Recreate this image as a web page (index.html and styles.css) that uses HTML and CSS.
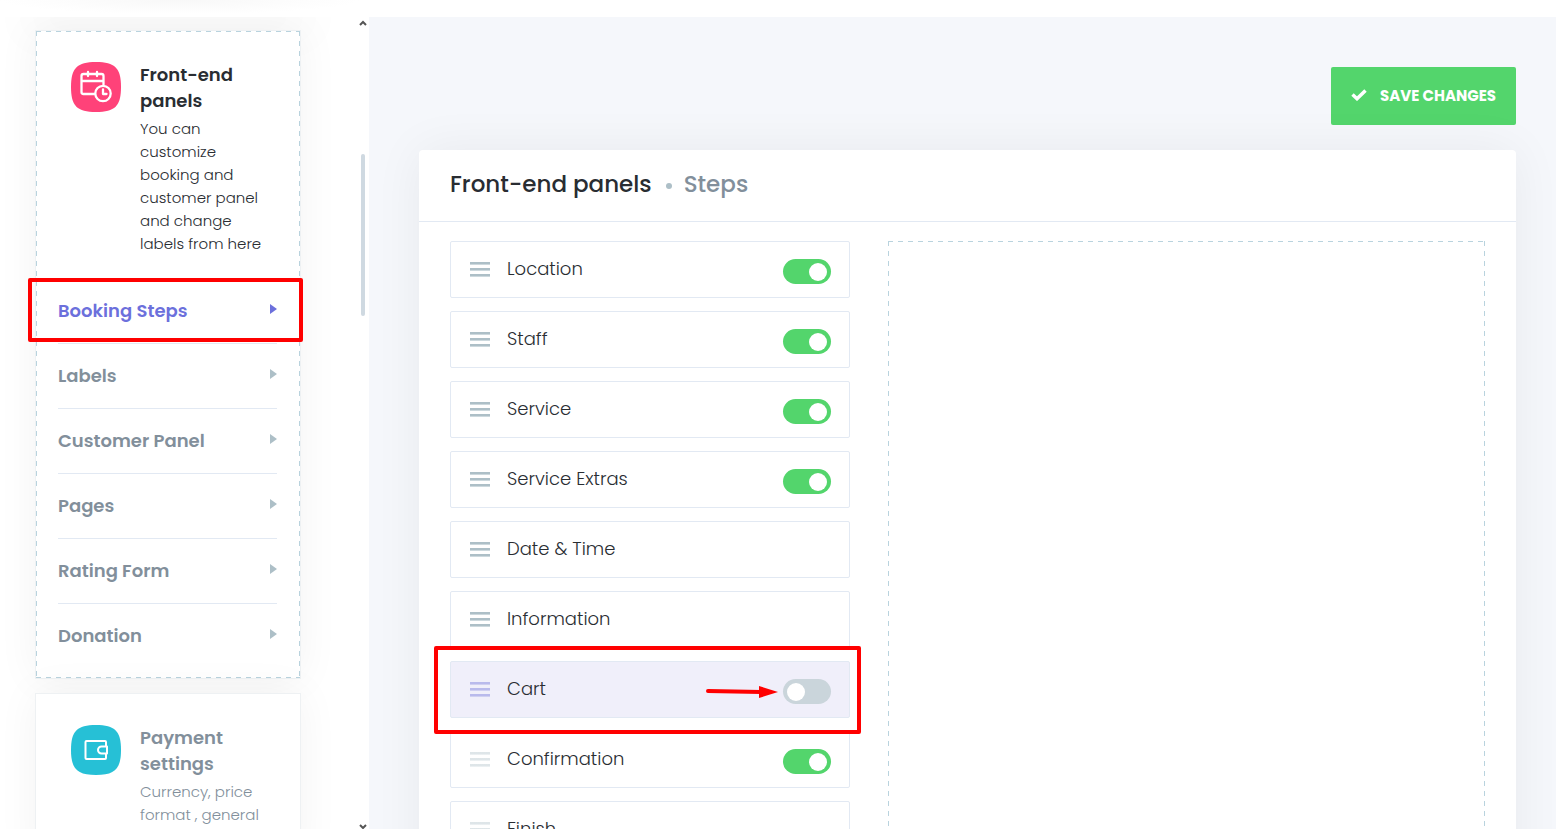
FILE: index.html
```html
<!DOCTYPE html>
<html lang="en">
<head>
<meta charset="utf-8">
<title>Front-end panels - Steps</title>
<link rel="stylesheet" href="styles.css">
</head>
<body>
<header class="topbar"></header>
<div class="layout">
  <aside class="sidebar">
    <div class="settings-list">
      <section class="settings-card settings-card--active">
        <div class="settings-head">
          <svg class="settings-icon" viewBox="0 0 50 50" aria-hidden="true">
            <path fill="#ff4279" d="M25 0C44 0 50 6 50 25S44 50 25 50 0 44 0 25 6 0 25 0z"/>
            <g fill="none" stroke="#fff" stroke-width="2.300" stroke-linecap="round" stroke-linejoin="round">
              <path d="M24 32H12.500Q10.500 32 10.500 30V14Q10.500 12 12.500 12H30.500Q32.500 12 32.500 14V22.500M10.500 19H32.500M17 10v4M26 10v4"/>
              <circle cx="32" cy="31.500" r="7.700"/>
              <path d="M32 27.500V32H35.500"/>
            </g>
          </svg>
          <div class="settings-text">
            <h3 class="settings-title">Front-end<br>panels</h3>
            <p class="settings-desc">You can<br>customize<br>booking and<br>customer panel<br>and change<br>labels from here</p>
          </div>
        </div>
        <nav class="subnav">
          <a class="subnav-link subnav-link--active" href="#steps">Booking Steps<span class="highlight highlight--nav"></span></a>
          <a class="subnav-link" href="#labels">Labels</a>
          <a class="subnav-link" href="#customer">Customer Panel</a>
          <a class="subnav-link" href="#pages">Pages</a>
          <a class="subnav-link" href="#rating">Rating Form</a>
          <a class="subnav-link" href="#donation">Donation</a>
        </nav>
      </section>
      <section class="settings-card">
        <div class="settings-head">
          <svg class="settings-icon" viewBox="0 0 50 50" aria-hidden="true">
            <path fill="#26c0d6" d="M25 0C44 0 50 6 50 25S44 50 25 50 0 44 0 25 6 0 25 0z"/>
            <g fill="none" stroke="#fff" stroke-width="2" stroke-linejoin="round">
              <rect x="14.500" y="16" width="20.500" height="18" rx="1"/>
              <path d="M36 21.500H30.500A3.500 3.500 0 0 0 30.500 28.500H36z" fill="#26c0d6"/>
            </g>
          </svg>
          <div class="settings-text">
            <h3 class="settings-title">Payment<br>settings</h3>
            <p class="settings-desc">Currency, price<br>format , general</p>
          </div>
        </div>
      </section>
    </div>
    <div class="scrollbar" aria-hidden="true">
      <svg class="scroll-arrow" viewBox="0 0 8 6"><path d="M1 5l3-3 3 3"/></svg>
      <div class="scroll-thumb"></div>
      <svg class="scroll-arrow" viewBox="0 0 8 6"><path d="M1 2l3 3 3-3"/></svg>
    </div>
  </aside>
  <main class="content">
    <button class="save" type="button">
      <svg class="save-icon" viewBox="0 0 16 12" aria-hidden="true"><path d="M1.500 5.500L6 9.700 14.500 1.500"/></svg>
      SAVE CHANGES
    </button>
    <section class="panel">
      <header class="panel-head">
        <h1 class="panel-title">Front-end panels</h1>
        <span class="panel-dot"></span>
        <span class="panel-sub">Steps</span>
      </header>
      <div class="panel-body">
        <ul class="steps">
          <li class="step"><span class="handle"></span><label class="step-name" for="s1">Location</label><input class="toggle" id="s1" type="checkbox" checked></li>
          <li class="step"><span class="handle"></span><label class="step-name" for="s2">Staff</label><input class="toggle" id="s2" type="checkbox" checked></li>
          <li class="step"><span class="handle"></span><label class="step-name" for="s3">Service</label><input class="toggle" id="s3" type="checkbox" checked></li>
          <li class="step"><span class="handle"></span><label class="step-name" for="s4">Service Extras</label><input class="toggle" id="s4" type="checkbox" checked></li>
          <li class="step"><span class="handle"></span><span class="step-name">Date &amp; Time</span></li>
          <li class="step"><span class="handle"></span><span class="step-name">Information</span></li>
          <li class="step step--selected"><span class="handle"></span><label class="step-name" for="s7">Cart</label>
            <svg class="pointer" viewBox="0 0 72 12" aria-hidden="true"><path d="M2 5L55 6" stroke="#f00" stroke-width="4" stroke-linecap="round"/><path d="M53 0L72 6 53 12z" fill="#f00"/></svg>
            <input class="toggle" id="s7" type="checkbox"><span class="highlight highlight--step"></span></li>
          <li class="step step--fixed"><span class="handle"></span><label class="step-name" for="s8">Confirmation</label><input class="toggle" id="s8" type="checkbox" checked></li>
          <li class="step step--fixed"><span class="handle"></span><span class="step-name">Finish</span></li>
        </ul>
        <div class="step-options"></div>
      </div>
    </section>
  </main>
</div>
</body>
</html>
```
FILE: styles.css
```css
* { box-sizing: border-box; }

body {
  margin: 0;
  height: 100vh;
  display: flex;
  flex-direction: column;
  overflow: hidden;
  background: #f5f7fb;
  color: #292d32;
  font-family: Poppins, Inter, "Open Sans", sans-serif;
}

h1, h3, p, ul { margin: 0; padding: 0; }

.topbar {
  flex: 0 0 17px;
  background: radial-gradient(180px 14px at 180px 0, #f8f8f8, #fff);
}

.layout {
  flex: 1;
  min-height: 0;
  display: flex;
}

.sidebar {
  flex: 0 0 369px;
  display: flex;
  overflow: hidden;
  background: #fff;
}

.settings-list {
  flex: 1;
  padding: 0 56px 0 35px;
}

.settings-list::before {
  content: "";
  display: block;
  margin-bottom: 13px;
  box-shadow: 0 0 50px 10px rgba(0, 0, 0, .06);
}

.settings-card {
  margin-bottom: 14px;
  padding: 31px 23px 10px 22px;
  border: 1px solid #eef1f3;
  background-color: #fff;
  box-shadow: 0 0 40px rgba(0, 0, 0, .05);
}

.settings-card--active,
.step-options {
  background-image:
    repeating-linear-gradient(90deg, #b9d3de 0 5px, transparent 5px 10px),
    repeating-linear-gradient(90deg, #b9d3de 0 5px, transparent 5px 10px),
    repeating-linear-gradient(#b9d3de 0 5px, transparent 5px 10px),
    repeating-linear-gradient(#b9d3de 0 5px, transparent 5px 10px);
  background-size: 100% 1px, 100% 1px, 1px 100%, 1px 100%;
  background-position: top, bottom, left, right;
  background-repeat: no-repeat;
}

.settings-head {
  display: flex;
  gap: 19px;
  padding-left: 13px;
  margin-bottom: 24px;
}

.settings-icon { flex: 0 0 50px; height: 50px; }

.settings-text { color: #828f9b; white-space: nowrap; }

.settings-card--active .settings-text { color: #292d32; }

.settings-title {
  margin-bottom: 3px;
  font-size: 18px;
  font-weight: 600;
  line-height: 26px;
}

.settings-desc {
  font-size: 15px;
  font-weight: 300;
  line-height: 23px;
}

.subnav-link {
  position: relative;
  display: flex;
  align-items: center;
  justify-content: space-between;
  height: 65px;
  padding-bottom: 2px;
  border-bottom: 1px solid #e2e9f3;
  color: #828f9b;
  font-size: 18px;
  font-weight: 600;
  text-decoration: none;
}

.subnav-link::after {
  content: "";
  margin-bottom: 2px;
  border: 5px solid transparent;
  border-left: 7px solid #adbfc7;
  border-right: 0;
}

.subnav-link:last-child { height: 64px; border-bottom: 0; }
.subnav-link--active { color: #6c70dc; }
.subnav-link--active::after { border-left-color: #6c70dc; }

.highlight {
  position: absolute;
  border: 4px solid #f00;
  border-radius: 2px;
  pointer-events: none;
}

.highlight--nav { inset: -1px -26px 1px -30px; }
.highlight--step { inset: -16px -12px -17px -17px; }

.scrollbar {
  display: flex;
  flex-direction: column;
  align-items: center;
  width: 12px;
  padding-top: 3px;
}

.scroll-arrow {
  width: 8px;
  height: 6px;
  fill: none;
  stroke: #555;
  stroke-width: 2;
}

.scroll-arrow:last-child { margin-top: auto; }

.scroll-thumb {
  width: 4px;
  height: 20%;
  margin-top: 128px;
  border-radius: 2px;
  background: #cfd9e1;
}

.content {
  flex: 1;
  display: flex;
  flex-direction: column;
  min-width: 0;
  padding: 50px 40px 0 50px;
  overflow: hidden;
}

.save {
  flex: none;
  align-self: flex-end;
  display: flex;
  align-items: center;
  gap: 13px;
  height: 58px;
  margin-bottom: 25px;
  padding: 0 20px 2px;
  border: 0;
  border-radius: 2px;
  background: #53d56c;
  color: #fff;
  font: inherit;
  font-size: 15px;
  font-weight: 700;
}

.save-icon {
  width: 16px;
  height: 12px;
  fill: none;
  stroke: #fff;
  stroke-width: 3.500;
}

.panel {
  flex: none;
  border-radius: 4px;
  background: #fff;
  box-shadow: 0 0 50px rgba(0, 0, 0, .06);
}

.panel-head {
  display: flex;
  align-items: center;
  height: 72px;
  padding: 0 31px 4px;
  border-bottom: 1px solid #e2e9f3;
  font-size: 23px;
  font-weight: 500;
}

.panel-title { font-size: 23px; font-weight: 500; }

.panel-dot {
  width: 6px;
  height: 6px;
  margin: 4px 12px 0 14px;
  border-radius: 50%;
  background: #adbfc7;
}

.panel-sub { color: #828f9b; }

.panel-body {
  display: grid;
  grid-template-columns: minmax(0, 400px) 1fr;
  gap: 38px;
  padding: 19px 31px 30px;
}

.steps {
  display: flex;
  flex-direction: column;
  gap: 13px;
  list-style: none;
}

.step {
  position: relative;
  display: flex;
  align-items: center;
  height: 57px;
  padding: 0 18px 0 19px;
  border: 1px solid #e2e9f3;
  border-radius: 2px;
  background: #fff;
}

.step-name {
  flex: 1;
  padding-bottom: 2px;
  font-size: 18px;
  font-weight: 300;
}

.handle {
  width: 20px;
  height: 15px;
  margin-right: 17px;
  background: repeating-linear-gradient(#adbfc7 0 2px, #cdd9de 2px 3px, transparent 3px 6px);
}

.step--fixed .handle { opacity: .4; }
.step--selected { background: #f0effa; z-index: 1; }
.step--selected .handle { background: repeating-linear-gradient(#b9baec 0 2px, #d0d0f1 2px 3px, transparent 3px 6px); }

.pointer {
  width: 72px;
  height: 12px;
  margin: 5px 5px 0 0;
}

.toggle {
  appearance: none;
  display: flex;
  align-items: center;
  width: 48px;
  height: 25px;
  margin: 4px 0 0;
  padding: 0 4px;
  border-radius: 13px;
  background: #cad5db;
}

.toggle::before {
  content: "";
  width: 18px;
  height: 18px;
  border-radius: 50%;
  background: #fff;
}

.toggle:checked {
  justify-content: flex-end;
  background: #53d56c;
}
```
